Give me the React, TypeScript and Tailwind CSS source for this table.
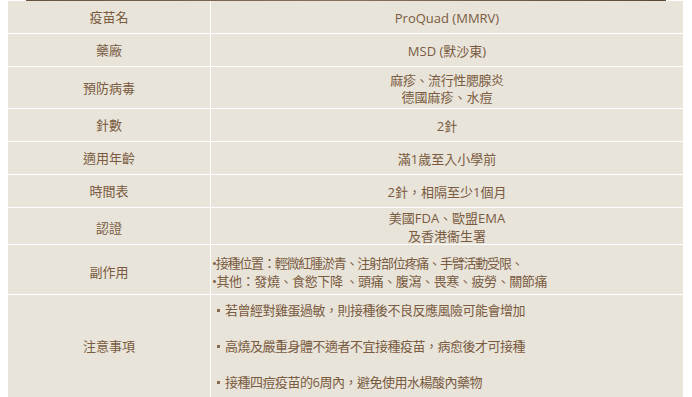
const rows: { label: string; h: string; lead: string; value: React.ReactNode }[] = [
  { label: "疫苗名", h: "h-[32px]", lead: "leading-[17px]", value: "ProQuad (MMRV)" },
  { label: "藥廠", h: "h-[32px]", lead: "leading-[17px]", value: "MSD (默沙東)" },
  {
    label: "預防病毒",
    h: "h-[41px]",
    lead: "leading-[17px]",
    value: (
      <>
        <span className="tracking-[-0.4px]">麻疹、流行性腮腺炎</span>
        <br />
        德國麻疹、水痘
      </>
    ),
  },
  { label: "針數", h: "h-[32px]", lead: "leading-[17px]", value: "2針" },
  { label: "適用年齡", h: "h-[32px]", lead: "leading-[17px]", value: "滿1歲至入小學前" },
  { label: "時間表", h: "h-[32px]", lead: "leading-[17px]", value: "2針，相隔至少1個月" },
  {
    label: "認證",
    h: "h-[36px]",
    lead: "leading-[18px]",
    value: (
      <>
        美國FDA、歐盟EMA
        <br />
        及香港衞生署
      </>
    ),
  },
];

const notes = [
  "若曾經對雞蛋過敏，則接種後不良反應風險可能會增加",
  "高燒及嚴重身體不適者不宜接種疫苗，病愈後才可接種",
  "接種四痘疫苗的6周內，避免使用水楊酸內藥物",
];

function Label({ children, h, pad = "pt-[2px]" }: { children: React.ReactNode; h: string; pad?: string }) {
  return (
    <div className={`${h} ${pad} bg-[#e8e4da] flex items-center justify-center`}>
      {children}
    </div>
  );
}

export default function App() {
  return (
    <div
      className="bg-white min-h-[397px] text-[13px] text-[#7a5b3f]"
      style={{ fontFamily: '"Open Sans", "Noto Sans CJK TC", sans-serif' }}
    >
      <div className="h-px ml-[26px] w-[640px] bg-gradient-to-r from-[#6a533c] via-[#8a7055] to-[#5e4935]" />
      <div className="ml-[8px] w-[675px] grid grid-cols-[202px_1fr] gap-px">
        {rows.map((r) => (
          <div key={r.label} className="contents">
            <Label h={r.h} pad={r.label === "認證" ? "pt-[6px]" : "pt-[2px]"}>
              {r.label}
            </Label>
            <div className={`${r.h} ${r.lead} bg-[#e8e4da] flex items-center justify-center text-center pt-[2px]`}>
              <div>{r.value}</div>
            </div>
          </div>
        ))}

        <Label h="h-[49px]" pad="pt-[6px]">
          副作用
        </Label>
        <div className="h-[49px] bg-[#e8e4da] pl-[1px] pt-[9px] leading-[18px]">
          <div className="tracking-[-1.2px]">•接種位置：輕微紅腫淤青、注射部位疼痛、手臂活動受限、</div>
          <div className="tracking-[-0.4px]">•其他：發燒、食慾下降 、頭痛、腹瀉、畏寒、疲勞、關節痛</div>
        </div>

        <Label h="h-[102px]">注意事項</Label>
        <div className="h-[102px] bg-[#e8e4da] pl-[6px] pt-[6px] leading-[18px] flex flex-col gap-[18px]">
          {notes.map((n) => (
            <div key={n} className="flex items-center">
              <span className="inline-block w-[3px] h-[3px] bg-[#8a6a4c] mr-[5px]" />
              <span className="tracking-[-0.5px]">{n}</span>
            </div>
          ))}
        </div>
      </div>
    </div>
  );
}
